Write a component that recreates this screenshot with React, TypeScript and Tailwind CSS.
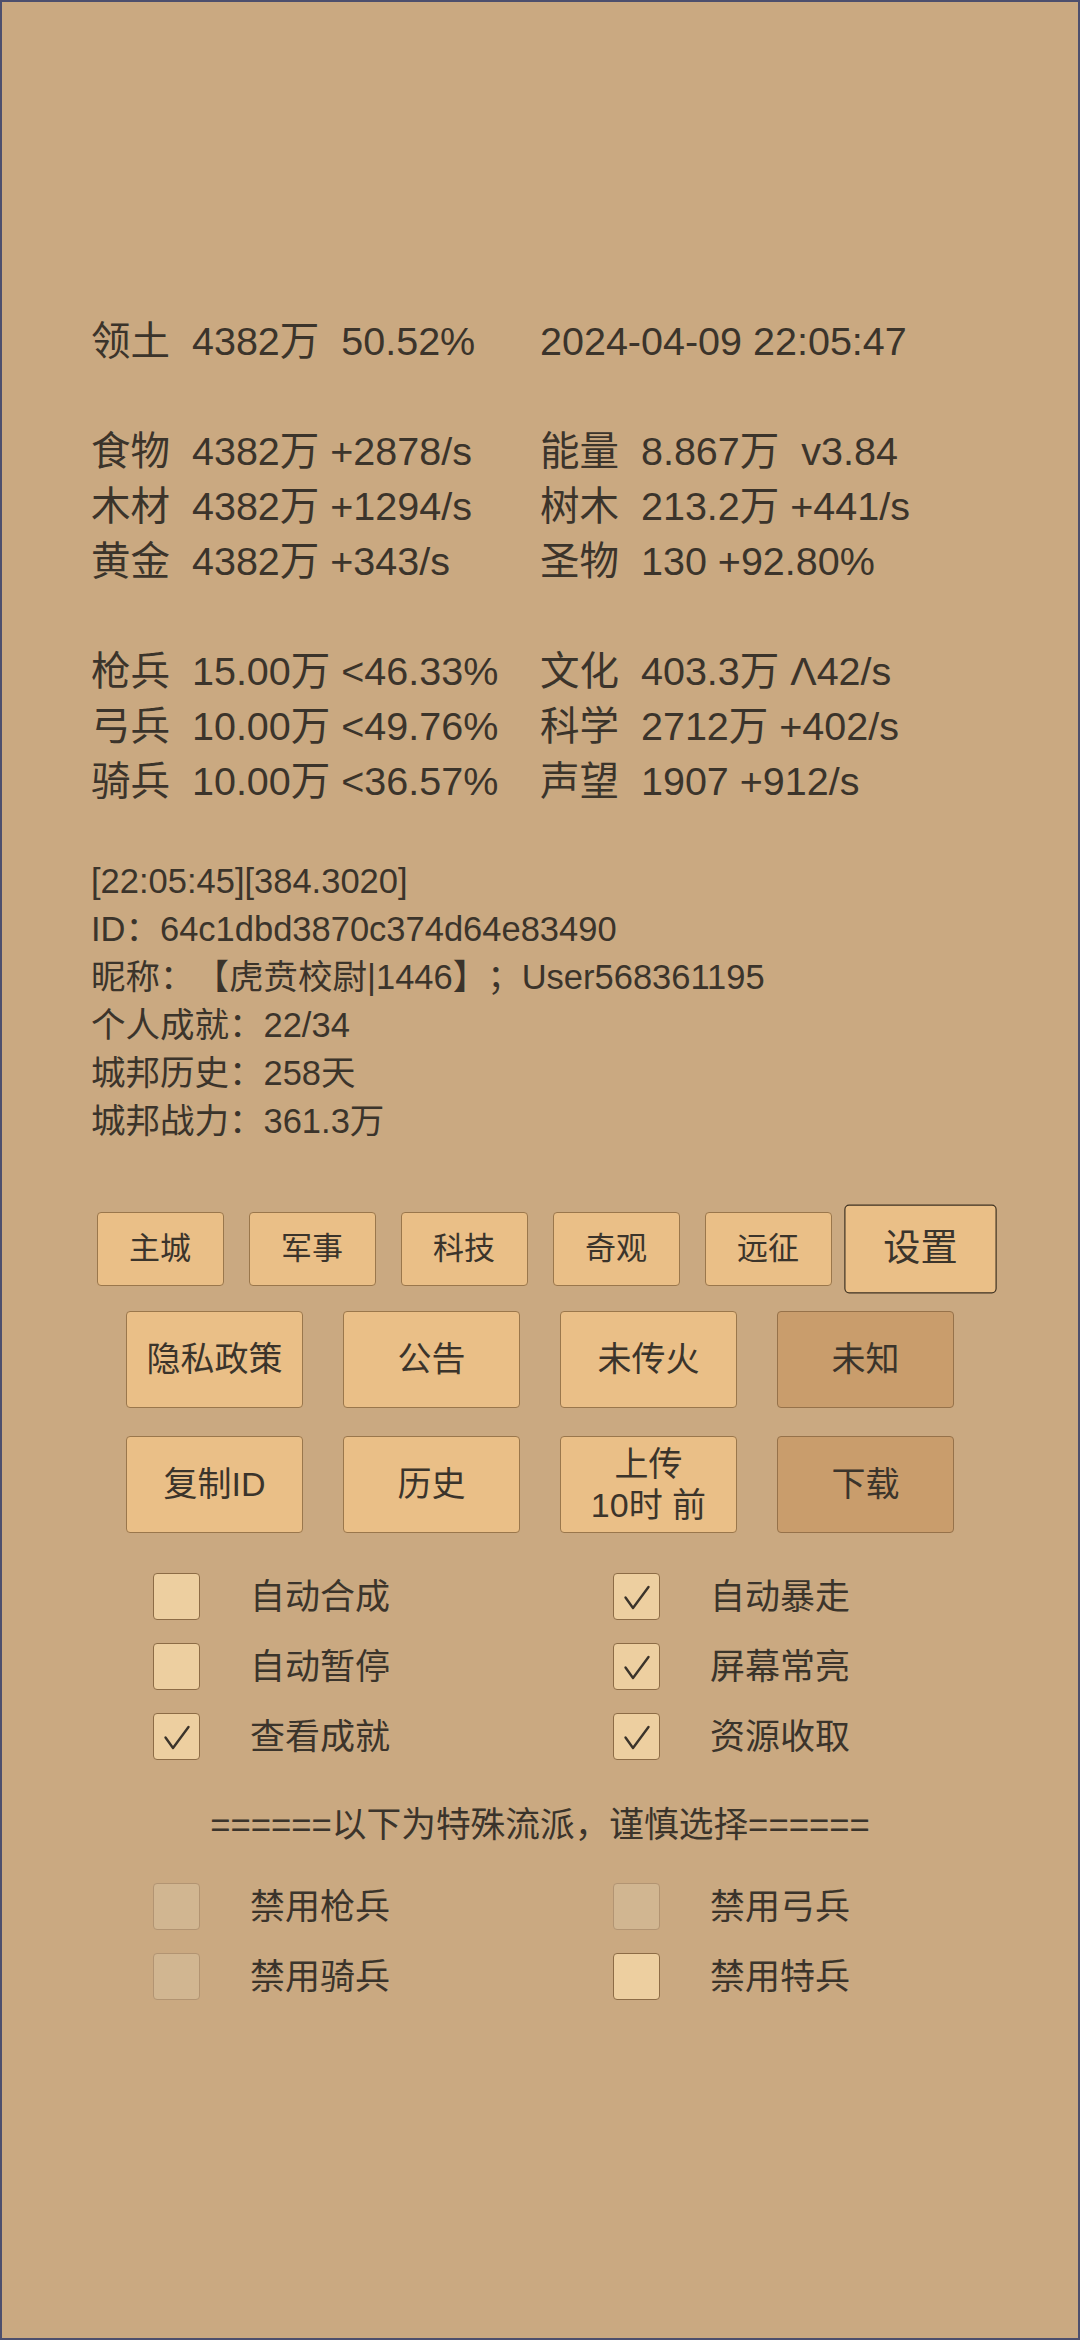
import React from "react";

const FONT: React.CSSProperties = {
  fontFamily: '"Liberation Sans", "Noto Sans CJK SC", sans-serif',
  // keep full-width CJK punctuation at full width
  ["textSpacingTrim" as any]: "space-all",
};

const topRows: [string, string][] = [
  ["领土  4382万  50.52%", "2024-04-09 22:05:47"],
  ["", ""],
  ["食物  4382万 +2878/s", "能量  8.867万  v3.84"],
  ["木材  4382万 +1294/s", "树木  213.2万 +441/s"],
  ["黄金  4382万 +343/s", "圣物  130 +92.80%"],
  ["", ""],
  ["枪兵  15.00万 <46.33%", "文化  403.3万 Λ42/s"],
  ["弓兵  10.00万 <49.76%", "科学  2712万 +402/s"],
  ["骑兵  10.00万 <36.57%", "声望  1907 +912/s"],
];

const infoLines = [
  "[22:05:45][384.3020]",
  "ID：64c1dbd3870c374d64e83490",
  "昵称：【虎贲校尉|1446】；User568361195",
  "个人成就：22/34",
  "城邦历史：258天",
  "城邦战力：361.3万",
];

function Check() {
  return (
    <svg width="45" height="45" viewBox="0 0 45 45" className="absolute left-0 top-0">
      <polyline
        points="11.5,23.5 19,34 34.5,13"
        fill="none"
        stroke="#3b342b"
        strokeWidth="2.4"
        strokeLinecap="round"
        strokeLinejoin="round"
      />
    </svg>
  );
}

function Box({ checked, disabled }: { checked?: boolean; disabled?: boolean }) {
  return (
    <div
      className={
        disabled
          ? "relative w-[47px] h-[47px] shrink-0 rounded-[4px] border border-[#b29472] bg-[#d1b691]"
          : "relative w-[47px] h-[47px] shrink-0 rounded-[4px] border border-[#8d6c46] bg-[#edcfa0]"
      }
    >
      {checked && <Check />}
    </div>
  );
}

function Item({ label, checked, disabled }: { label: string; checked?: boolean; disabled?: boolean }) {
  return (
    <div className="flex items-center gap-[50px] h-[47px]">
      <Box checked={checked} disabled={disabled} />
      <span className="text-[35px] leading-[47px]">{label}</span>
    </div>
  );
}

function TabBtn({ label, active }: { label: string; active?: boolean }) {
  return (
    <div
      className={
        active
          ? "w-[127px] h-[74px] flex items-center justify-center rounded-[4px] border-[1.5px] border-[#3f3222] bg-[#eabf87] text-[31px] scale-[1.2]"
          : "w-[127px] h-[74px] flex items-center justify-center rounded-[4px] border-[1.5px] border-[#9a774c] bg-[#eabf87] text-[31px]"
      }
    >
      {label}
    </div>
  );
}

function BigBtn({ children, dark }: { children: React.ReactNode; dark?: boolean }) {
  return (
    <div
      className={
        dark
          ? "w-[177px] h-[97px] flex flex-col items-center justify-center rounded-[4px] border-[1.5px] border-[#96724a] bg-[#c99d6c] text-[34px] leading-[41px] text-center"
          : "w-[177px] h-[97px] flex flex-col items-center justify-center rounded-[4px] border-[1.5px] border-[#9a774c] bg-[#eabf87] text-[34px] leading-[41px] text-center"
      }
    >
      {children}
    </div>
  );
}

export default function App() {
  return (
    <div
      className="w-[1080px] h-[2340px] border-2 border-[#4d4f6d] bg-[#caa981] text-[#3b342b] overflow-hidden"
      style={FONT}
    >
      <div className="pt-[312px] pl-[89px]">
        <div className="grid grid-cols-[449px_1fr] text-[39.5px] leading-[55px] whitespace-pre">
          {topRows.map(([a, b], i) => (
            <React.Fragment key={i}>
              <div className="h-[55px]">{a}</div>
              <div className="h-[55px]">{b}</div>
            </React.Fragment>
          ))}
        </div>
        <div className="mt-[48px] text-[34.5px] leading-[48px] whitespace-pre">
          {infoLines.map((l, i) => (
            <div key={i}>{l}</div>
          ))}
        </div>
      </div>

      <div className="mt-[67px] flex justify-center gap-[25px]">
        <TabBtn label="主城" />
        <TabBtn label="军事" />
        <TabBtn label="科技" />
        <TabBtn label="奇观" />
        <TabBtn label="远征" />
        <TabBtn label="设置" active />
      </div>

      <div className="mt-[25px] flex justify-center gap-[40px]">
        <BigBtn>隐私政策</BigBtn>
        <BigBtn>公告</BigBtn>
        <BigBtn>未传火</BigBtn>
        <BigBtn dark>未知</BigBtn>
      </div>
      <div className="mt-[28px] flex justify-center gap-[40px]">
        <BigBtn>复制ID</BigBtn>
        <BigBtn>历史</BigBtn>
        <BigBtn>
          <span>上传</span>
          <span>10时 前</span>
        </BigBtn>
        <BigBtn dark>下载</BigBtn>
      </div>

      <div className="mt-[40px] pl-[151px] grid grid-cols-[460px_1fr] gap-y-[23px]">
        <Item label="自动合成" />
        <Item label="自动暴走" checked />
        <Item label="自动暂停" />
        <Item label="屏幕常亮" checked />
        <Item label="查看成就" checked />
        <Item label="资源收取" checked />
      </div>

      <div className="mt-[41px] text-center text-[34.7px] leading-[48px]">
        ======以下为特殊流派，谨慎选择======
      </div>

      <div className="mt-[34px] pl-[151px] grid grid-cols-[460px_1fr] gap-y-[23px]">
        <Item label="禁用枪兵" disabled />
        <Item label="禁用弓兵" disabled />
        <Item label="禁用骑兵" disabled />
        <Item label="禁用特兵" />
      </div>
    </div>
  );
}
